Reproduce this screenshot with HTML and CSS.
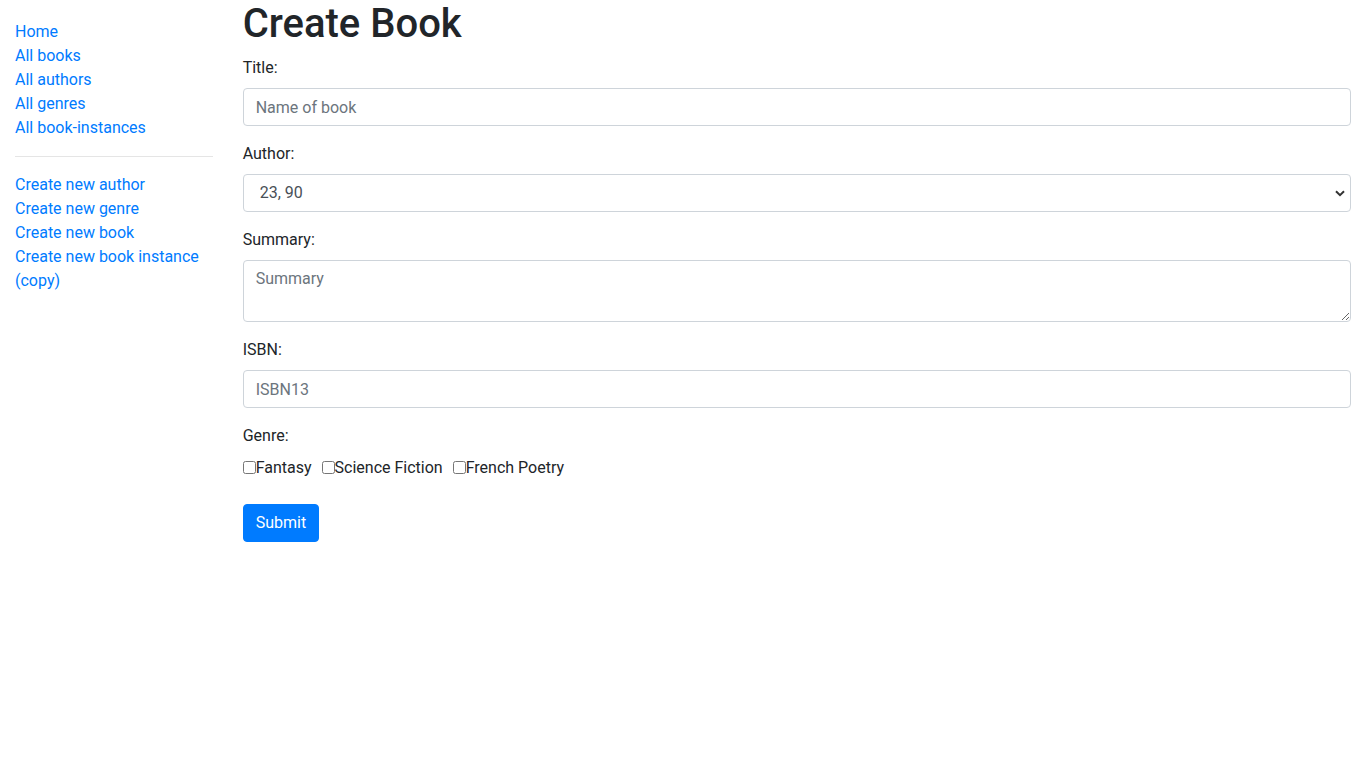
FILE: index.html
```html
<!DOCTYPE html>
<html lang="en">
<head>
<meta charset="utf-8">
<title>Create Book</title>
<link rel="stylesheet" href="styles.css">
</head>
<body>
<div class="container">
  <div class="sidebar">
    <ul class="sidebar-nav">
      <li><a href="#">Home</a></li>
      <li><a href="#">All books</a></li>
      <li><a href="#">All authors</a></li>
      <li><a href="#">All genres</a></li>
      <li><a href="#">All book-instances</a></li>
      <li><hr class="divider"></li>
      <li><a href="#">Create new author</a></li>
      <li><a href="#">Create new genre</a></li>
      <li><a href="#">Create new book</a></li>
      <li><a href="#">Create new book instance (copy)</a></li>
    </ul>
  </div>
  <div class="main">
    <h1 class="title">Create Book</h1>
    <form class="form">
      <div class="form-group">
        <label class="label" for="title">Title:</label>
        <input class="form-control" id="title" type="text" placeholder="Name of book">
      </div>
      <div class="form-group">
        <label class="label" for="author">Author:</label>
        <select class="form-control select" id="author">
          <option>23, 90</option>
        </select>
      </div>
      <div class="form-group">
        <label class="label" for="summary">Summary:</label>
        <textarea class="form-control textarea" id="summary" rows="2" placeholder="Summary"></textarea>
      </div>
      <div class="form-group">
        <label class="label" for="isbn">ISBN:</label>
        <input class="form-control" id="isbn" type="text" placeholder="ISBN13">
      </div>
      <div class="form-group">
        <label class="label">Genre:</label>
        <div class="genres"><div class="genre"><input class="checkbox-input" type="checkbox" id="g1"><label class="label" for="g1">Fantasy</label></div><div class="genre"><input class="checkbox-input" type="checkbox" id="g2"><label class="label" for="g2">Science Fiction</label></div><div class="genre"><input class="checkbox-input" type="checkbox" id="g3"><label class="label" for="g3">French Poetry</label></div></div>
      </div>
      <button class="btn" type="button">Submit</button>
    </form>
  </div>
</div>
</body>
</html>
```
FILE: styles.css
```css
* { box-sizing: border-box; }
html, body { margin: 0; padding: 0; }
body {
  font-family: "Segoe UI", Roboto, "Noto Sans", "Liberation Sans", sans-serif;
  font-size: 16px;
  line-height: 1.5;
  color: #212529;
  background: #fff;
}
.container {
  display: flex;
  padding: 0 15px;
}
.sidebar {
  width: 197.67px;
  flex: none;
  margin-right: 30px;
}
.sidebar-nav {
  margin: 20px 0 0;
  padding: 0;
  list-style: none;
}
.sidebar-nav a {
  color: #007bff;
  text-decoration: none;
}
.divider {
  margin: 16px 0;
  border: 0;
  border-top: 1px solid rgba(0,0,0,.1);
  height: 0;
}
.main {
  flex: 1;
  min-width: 0;
}
.title {
  margin: 0 0 8px;
  font-size: 40px;
  font-weight: 500;
  line-height: 1.2;
}
.form { margin: 0; }
.form-group { margin-bottom: 16px; }
.label {
  display: inline-block;
  margin-bottom: 8px;
}
.form-control {
  display: block;
  width: 100%;
  height: 38px;
  padding: 6px 12px;
  font: inherit;
  font-size: 16px;
  line-height: 1.5;
  color: #495057;
  background: #fff;
  border: 1px solid #ced4da;
  border-radius: 4px;
  outline: none;
}
.form-control::placeholder { color: #6c757d; opacity: 1; }
.select {
  appearance: none;
  -webkit-appearance: none;
  padding-left: 16px;
  background-image: url("data:image/svg+xml,%3Csvg xmlns='http://www.w3.org/2000/svg' width='10' height='7' viewBox='0 0 10 7'%3E%3Cpath d='M1 1.2l4 4 4-4' fill='none' stroke='%23333' stroke-width='2'/%3E%3C/svg%3E");
  background-repeat: no-repeat;
  background-position: right 5px center;
  background-size: 10px 7px;
}
.textarea {
  height: 62px;
  resize: vertical;
}
.genres { display: block; }
.genre {
  display: inline;
  padding-right: 10px;
}
.checkbox-input {
  width: 13px;
  height: 13px;
  margin: 0;
  vertical-align: -1px;
}
.btn {
  display: inline-block;
  font: inherit;
  font-size: 16px;
  line-height: 1.5;
  color: #fff;
  background: #007bff;
  border: 1px solid #007bff;
  border-radius: 4px;
  padding: 6px 12px;
  cursor: pointer;
}
```
